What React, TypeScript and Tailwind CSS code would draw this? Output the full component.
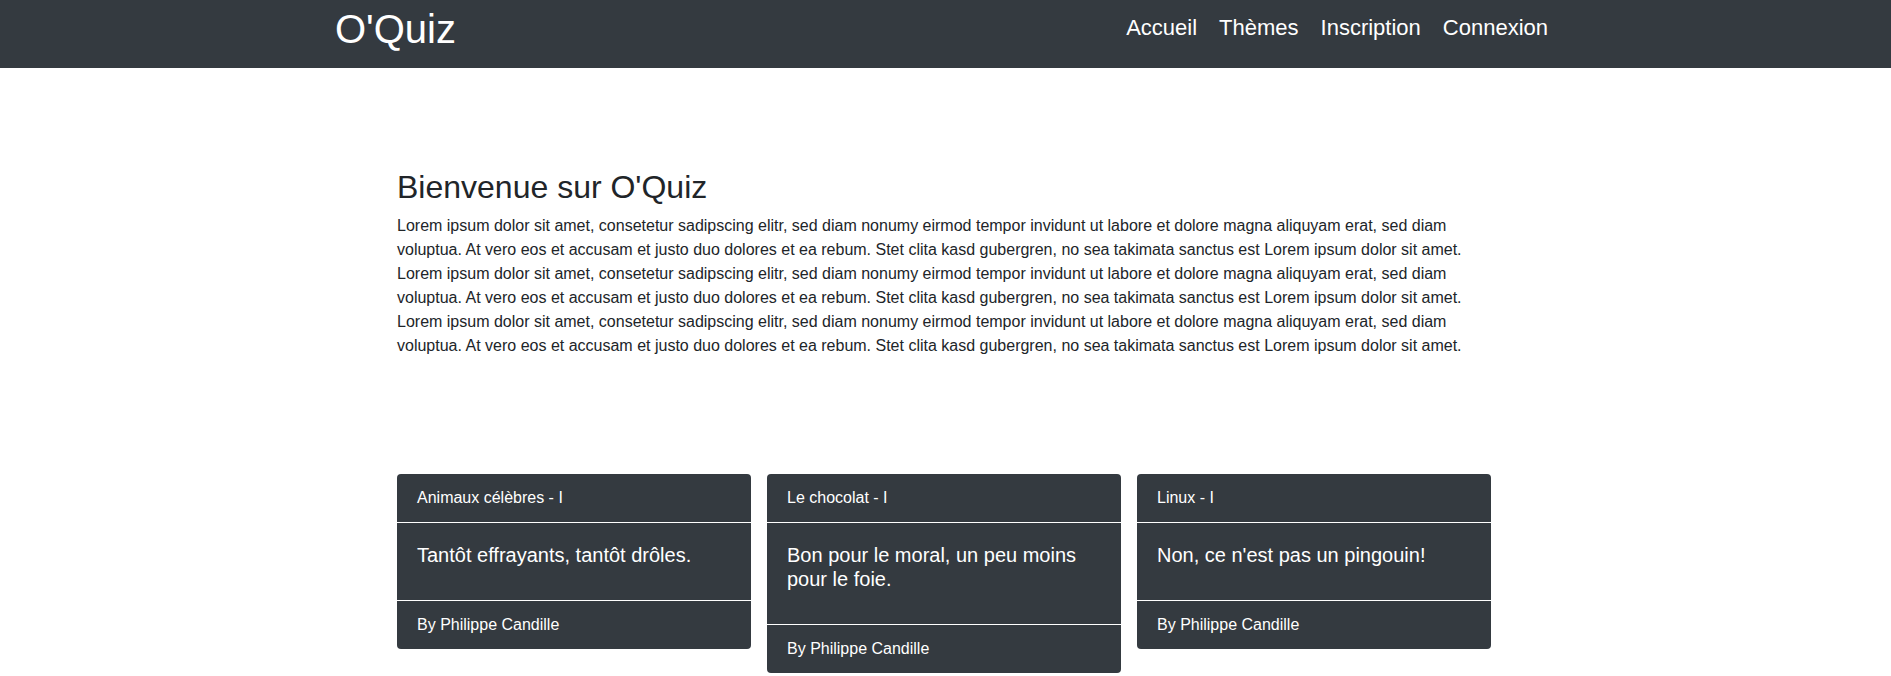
const lorem =
  "Lorem ipsum dolor sit amet, consetetur sadipscing elitr, sed diam nonumy eirmod tempor invidunt ut labore et dolore magna aliquyam erat, sed diam voluptua. At vero eos et accusam et justo duo dolores et ea rebum. Stet clita kasd gubergren, no sea takimata sanctus est Lorem ipsum dolor sit amet.";

const quizzes = [
  { title: "Animaux célèbres - I", text: "Tantôt effrayants, tantôt drôles.", author: "Philippe Candille" },
  { title: "Le chocolat - I", text: "Bon pour le moral, un peu moins pour le foie.", author: "Philippe Candille" },
  { title: "Linux - I", text: "Non, ce n'est pas un pingouin!", author: "Philippe Candille" },
];

const links = ["Accueil", "Thèmes", "Inscription", "Connexion"];

export default function App() {
  return (
    <div className="min-h-[676px] bg-white font-['Liberation_Sans',Arial,sans-serif] text-[#212529]">
      <header className="h-[68px] bg-[#343a40] text-white">
        <div className="mx-auto flex w-[1221px] items-start justify-between">
          <a href="#" className="pt-[5px] text-[40px] leading-[48px]">
            O'Quiz
          </a>
          <nav className="flex gap-[6px] pt-[11px]">
            {links.map((link) => (
              <a key={link} href="#" className="px-2 text-[22px] leading-[33px]">
                {link}
              </a>
            ))}
          </nav>
        </div>
      </header>

      <main className="mx-auto w-[1097px] pt-[100px] pr-[3px] pb-[100px]">
        <section>
          <h1 className="mb-2 text-[32px] leading-[1.2]">Bienvenue sur O'Quiz</h1>
          <p className="text-base leading-6">
            {lorem} {lorem} {lorem}
          </p>
        </section>

        <section className="mt-[116px] grid grid-cols-3 items-start gap-4">
          {quizzes.map((quiz) => (
            <div key={quiz.title} className="rounded bg-[#343a40] text-white">
              <div className="border-b border-white px-5 py-3 text-base leading-6">{quiz.title}</div>
              <div className="px-5 pt-5 pb-[21px]">
                <p className="mb-3 text-xl leading-[1.2]">{quiz.text}</p>
              </div>
              <div className="border-t border-white px-5 py-3 text-base leading-6">By {quiz.author}</div>
            </div>
          ))}
        </section>
      </main>
    </div>
  );
}
